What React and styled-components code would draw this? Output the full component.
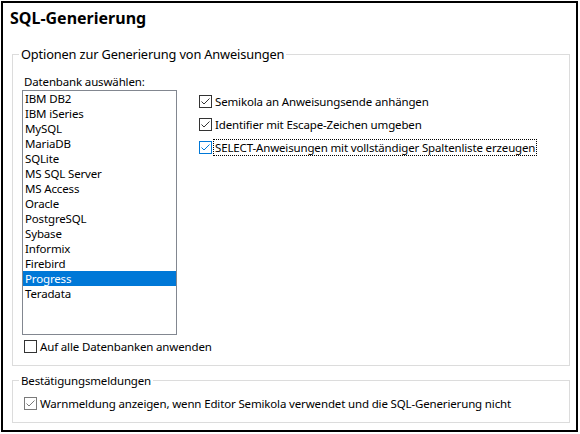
import styled, { createGlobalStyle } from 'styled-components'

const GlobalStyle = createGlobalStyle`
  body {
    margin: 0;
    background: #fff;
    font-family: 'Noto Sans', 'Segoe UI', sans-serif;
  }
`

const Frame = styled.div`
  box-sizing: border-box;
  width: 577px;
  height: 431px;
  margin: 1px;
  border: 2px solid #000;
  padding: 0 4px 0 7px;
  background: #fff;
  color: #000;
  font-size: 11.5px;
  line-height: 15px;
  letter-spacing: -0.15px;
`

const Title = styled.h1`
  margin: 5px 0 18px;
  font-size: 16px;
  line-height: 20px;
  font-weight: 700;
  letter-spacing: 0;
`

const Group = styled.fieldset`
  margin: 0 2px;
  padding: 0;
  min-width: 0;
  border: 1px solid #dcdcdc;

  & + & {
    margin-top: 7px;
  }
`

const Legend = styled.legend`
  margin-left: 6px;
  padding: 0 2px;
  font-size: ${(p) => (p.$large ? '12.8px' : 'inherit')};
  line-height: ${(p) => (p.$large ? '16px' : '15px')};
`

const GroupBody = styled.div`
  display: flex;
  gap: 22px;
  padding: ${(p) => p.$pad};
`

const Column = styled.div`
  display: flex;
  flex-direction: column;
  flex: ${(p) => (p.$width ? `0 0 ${p.$width}px` : '1 1 auto')};
  width: ${(p) => (p.$width ? `${p.$width}px` : 'auto')};
  min-width: 0;
  gap: ${(p) => p.$gap || 0}px;
  padding-top: ${(p) => p.$top || 0}px;
`

const FieldLabel = styled.div`
  margin-left: 2px;
`

const ListBox = styled.ul`
  box-sizing: border-box;
  width: 155px;
  height: 245px;
  margin: 1px 0 0;
  padding: 0;
  list-style: none;
  border: 1px solid #828790;
`

const ListItem = styled.li`
  height: 15px;
  padding: 0 2px;
  background: ${(p) => (p.$selected ? '#0078d7' : 'transparent')};
  color: ${(p) => (p.$selected ? '#fff' : '#000')};
`

const CheckRow = styled.label`
  display: flex;
  align-items: center;
  gap: 1px;
  height: 17px;
  margin: ${(p) => p.$margin || 0};
`

const Box = styled.span`
  box-sizing: border-box;
  display: flex;
  width: 13px;
  height: 13px;
  flex: none;
  border: 1px solid ${(p) => p.$color};
  background: #fff;
`

const CheckText = styled.span`
  padding: 0 1px;
  line-height: 15px;
  border: 1px ${(p) => (p.$focus ? 'dotted #000' : 'solid transparent')};
  white-space: nowrap;
`

const databases = [
  'IBM DB2',
  'IBM iSeries',
  'MySQL',
  'MariaDB',
  'SQLite',
  'MS SQL Server',
  'MS Access',
  'Oracle',
  'PostgreSQL',
  'Sybase',
  'Informix',
  'Firebird',
  'Progress',
  'Teradata',
]

const Checkbox = ({ checked, color = '#333', focus, margin, children }) => (
  <CheckRow $margin={margin}>
    <Box $color={color}>
      {checked && (
        <svg width="11" height="11" viewBox="0 0 11 11">
          <path d="M1.5 5.5 L4 8 L9.5 2.5" fill="none" stroke={color} strokeWidth="1" />
        </svg>
      )}
    </Box>
    <CheckText $focus={focus}>{children}</CheckText>
  </CheckRow>
)

const App = () => (
  <>
    <GlobalStyle />
    <Frame>
      <Title>SQL-Generierung</Title>
      <Group>
        <Legend $large>Optionen zur Generierung von Anweisungen</Legend>
        <GroupBody $pad="12px 0 10px 9px">
          <Column $width={155}>
            <FieldLabel>Datenbank auswählen:</FieldLabel>
            <ListBox>
              {databases.map((db) => (
                <ListItem key={db} $selected={db === 'Progress'}>
                  {db}
                </ListItem>
              ))}
            </ListBox>
            <Checkbox margin="3px 0 0 2px">Auf alle Datenbanken anwenden</Checkbox>
          </Column>
          <Column $gap={6} $top={19}>
            <Checkbox checked>Semikola an Anweisungsende anhängen</Checkbox>
            <Checkbox checked>Identifier mit Escape-Zeichen umgeben</Checkbox>
            <Checkbox checked focus color="#0078d7">
              SELECT-Anweisungen mit vollständiger Spaltenliste erzeugen
            </Checkbox>
          </Column>
        </GroupBody>
      </Group>
      <Group>
        <Legend>Bestätigungsmeldungen</Legend>
        <GroupBody $pad="7px 0 10px 11px">
          <Checkbox checked color="#7a7a7a">
            Warnmeldung anzeigen, wenn Editor Semikola verwendet und die SQL-Generierung nicht
          </Checkbox>
        </GroupBody>
      </Group>
    </Frame>
  </>
)

export default App
